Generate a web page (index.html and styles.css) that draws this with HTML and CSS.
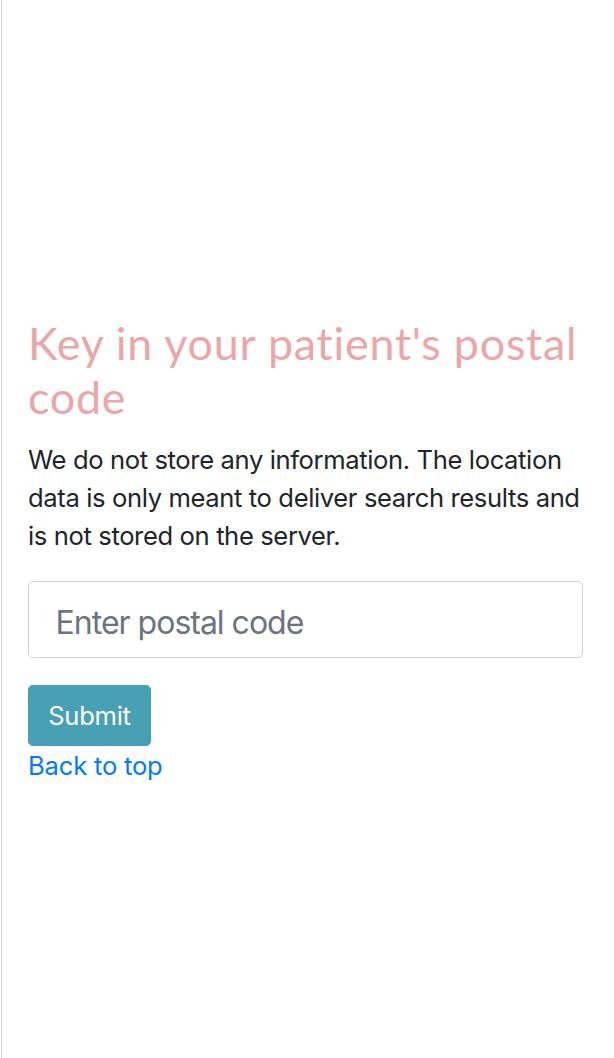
FILE: index.html
```html
<!DOCTYPE html>
<html lang="en">
<head>
<meta charset="utf-8">
<title>Postal code</title>
<link rel="stylesheet" href="styles.css">
</head>
<body>
<div class="page">
  <main class="content">
    <h3 class="title">Key in your patient's postal code</h3>
    <p class="lead-text">We do not store any information. The location data is only meant to deliver search results and is not stored on the server.</p>
    <form class="postal-form">
      <div class="form-group">
        <input class="postal-input" type="text" placeholder="Enter postal code">
      </div>
      <button class="submit-btn" type="button">Submit</button>
    </form>
    <a class="back-link" href="#">Back to top</a>
  </main>
</div>
</body>
</html>
```
FILE: styles.css
```css
html, body {
  margin: 0;
  padding: 0;
  background: #fff;
}
.page {
  margin-left: 1px;
  border-left: 1px solid #d2d2d2;
  min-height: 1058px;
  box-sizing: border-box;
  padding: 317px 31px 0 26px;
}
.content {
  display: flex;
  flex-direction: column;
  align-items: flex-start;
}
.title {
  margin: 0 0 16px 0;
  font-family: "Lato", "Noto Sans", sans-serif;
  font-weight: 400;
  font-size: 44.8px;
  line-height: 53.76px;
  letter-spacing: 0.8px;
  color: #eba7a7;
}
.lead-text {
  margin: 0 0 25.6px 0;
  font-family: "Inter", "Liberation Sans", sans-serif;
  font-size: 25.6px;
  line-height: 38.4px;
  letter-spacing: -0.38px;
  color: #212529;
}
.postal-form {
  width: 100%;
  display: flex;
  flex-direction: column;
  align-items: flex-start;
}
.form-group {
  width: 100%;
  margin-bottom: 27px;
}
.postal-input {
  display: block;
  width: 100%;
  box-sizing: border-box;
  height: 76.8px;
  padding: 16px 25.6px 9.6px 26.6px;
  font-family: "Inter", "Liberation Sans", sans-serif;
  font-size: 32px;
  letter-spacing: -1px;
  color: #495057;
  border: 1.6px solid #ced4da;
  border-radius: 4.8px;
  background: #fff;
  outline: none;
}
.postal-input::placeholder {
  color: #6c757d;
}
.submit-btn {
  font-family: "Inter", "Liberation Sans", sans-serif;
  font-size: 25.6px;
  line-height: 38.4px;
  letter-spacing: -0.3px;
  padding: 11px 19.2px 9.4px;
  border: 1.6px solid #48a0b4;
  border-radius: 4.8px;
  background: #48a0b4;
  color: #fff;
}
.back-link {
  padding-top: 1px;
  font-family: "Inter", "Liberation Sans", sans-serif;
  font-size: 25.6px;
  line-height: 38.4px;
  letter-spacing: -0.2px;
  color: #007bff;
  text-decoration: none;
}
```
